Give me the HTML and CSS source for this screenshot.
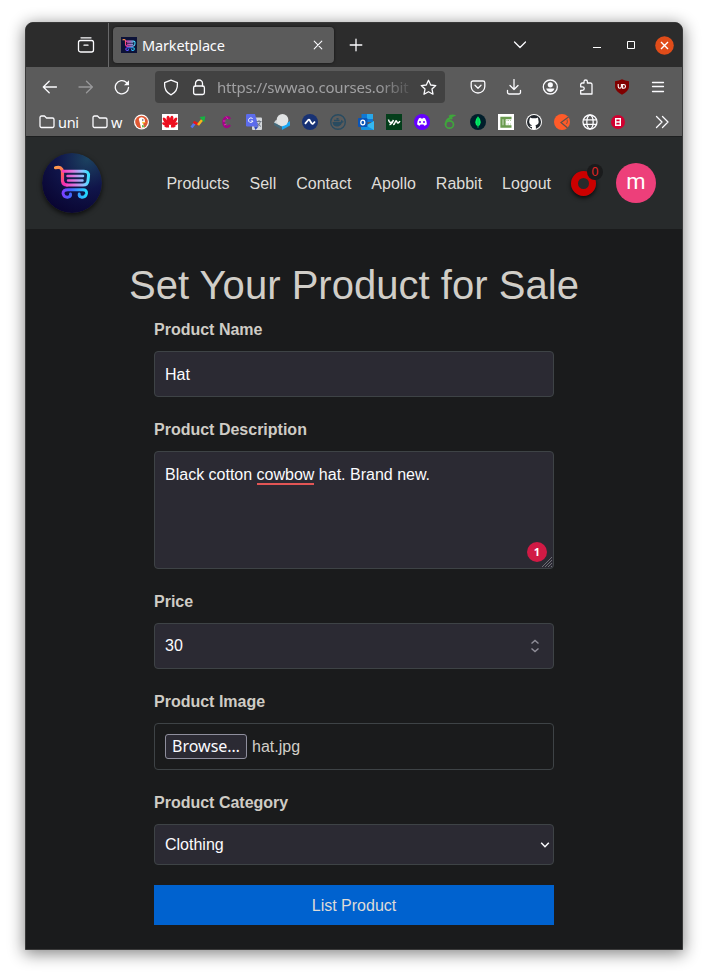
FILE: index.html
```html
<!DOCTYPE html>
<html lang="en">
<head>
<meta charset="utf-8">
<title>Marketplace</title>
<link rel="stylesheet" href="styles.css">
</head>
<body>
<svg width="0" height="0" class="defs">
  <defs>
    <linearGradient id="handle" gradientUnits="userSpaceOnUse" x1="12" y1="14" x2="22" y2="32">
      <stop offset="0" stop-color="#ffa14a"/><stop offset=".5" stop-color="#ff5a5a"/><stop offset="1" stop-color="#f32bb5"/>
    </linearGradient>
    <linearGradient id="basket" gradientUnits="userSpaceOnUse" x1="19" y1="26" x2="48" y2="22">
      <stop offset="0" stop-color="#ff28b0"/><stop offset=".45" stop-color="#d87be0"/><stop offset=".75" stop-color="#8cc4ff"/><stop offset="1" stop-color="#22e6ff"/>
    </linearGradient>
    <linearGradient id="wheels" gradientUnits="userSpaceOnUse" x1="19" y1="40" x2="46" y2="40">
      <stop offset="0" stop-color="#8a35ff"/><stop offset=".35" stop-color="#4464ff"/><stop offset="1" stop-color="#20e5ff"/>
    </linearGradient>
    <radialGradient id="night" cx=".75" cy=".1" r="1"><stop offset="0" stop-color="#1c4260"/><stop offset=".5" stop-color="#10154a"/><stop offset="1" stop-color="#090430"/></radialGradient>
    <g id="cart-mark" fill="none" stroke-linecap="round" stroke-linejoin="round">
      <path d="M13.500 14.700 Q20 13 20.500 18.500 V28 Q21 32 25 32" stroke="url(#handle)" stroke-width="3.200"/>
      <path d="M21 18.300 H42 Q47 18.300 46.500 23 L46 27.500 Q45.500 32 41 32 H25" stroke="url(#basket)" stroke-width="3"/>
      <path d="M25.500 22.900 H41 M26 27.400 H40.500" stroke="url(#basket)" stroke-width="2.500"/>
      <path d="M26 36.700 H41 Q45 36.700 44.500 40.500 Q43.500 44.700 39.500 44.200 Q36.700 43.500 37.200 41 M26 36.700 Q21 36.700 21 40.500 Q22 44.700 26 44.200 Q29 43.500 28.500 41" stroke="url(#wheels)" stroke-width="2.900"/>
    </g>
  </defs>
</svg>
<div class="window">
  <div class="tabstrip">
    <div class="tabview">
      <svg width="18" height="18" viewBox="0 0 18 18" class="line"><path d="M4 1.800h10"/><rect x="1.500" y="4.500" width="15" height="11.500" rx="2"/><path d="M7 9.200h4"/></svg>
    </div>
    <div class="tab">
      <svg width="16" height="16" viewBox="8 7 44 44"><rect x="8" y="7" width="44" height="44" fill="#0c1238"/><use href="#cart-mark"/></svg>
      <span class="tab-title">Marketplace</span>
      <svg width="10" height="10" viewBox="0 0 10 10" class="line thin"><path d="M1.200 1.200l7.600 7.600M8.800 1.200l-7.600 7.600"/></svg>
    </div>
    <svg width="14" height="14" viewBox="0 0 14 14" class="line plus"><path d="M7 1.200v11.600M1.200 7h11.600"/></svg>
    <svg width="14" height="8" viewBox="0 0 14 8" class="line all-tabs"><path d="M1.500 1L7 6.500 12.500 1"/></svg>
    <svg width="8" height="8" viewBox="0 0 8 8" class="minimize"><path d="M0 6.500h8" stroke="#fff"/></svg>
    <svg width="8" height="8" viewBox="0 0 8 8" class="maximize"><path d="M.5.500h7v7h-7z" fill="none" stroke="#fff"/></svg>
    <svg width="19" height="19" viewBox="0 0 19 19" class="close"><circle cx="9.500" cy="9.500" r="9.300" fill="#e04c19"/><path d="M6 6l7 7M13 6l-7 7" stroke="#fff" stroke-width="1.400"/></svg>
  </div>
  <div class="toolbar">
    <div class="group">
      <svg width="16" height="16" viewBox="0 0 16 16" class="line"><path d="M14.500 8H1.300M7.200 2.300L1.300 8l5.900 5.700"/></svg>
      <svg width="16" height="16" viewBox="0 0 16 16" class="line dim"><path d="M1 8h13.400M8.500 2.300L14.400 8l-5.900 5.700"/></svg>
      <svg width="16" height="16" viewBox="0 0 16 16" class="line"><path d="M14.500 8.500A6.600 6.600 0 1 1 12.500 3.500"/><path d="M15 1.300v5h-5z" fill="#fbfbfe" stroke="none"/></svg>
    </div>
    <div class="urlbar">
      <svg width="16" height="17" viewBox="0 0 16 17" class="line"><path d="M8 1.200L14.400 3.700C14.800 9 13 13.500 8 15.800 3 13.500 1.200 9 1.600 3.700z"/></svg>
      <svg width="14" height="17" viewBox="0 0 14 17" class="line lock"><rect x="1.600" y="7" width="10.800" height="8.500" rx="1.800"/><path d="M3.500 7V4.500a3.500 3.500 0 0 1 7 0V7"/></svg>
      <span class="url">https://swwao.courses.orbit</span>
      <svg width="17" height="17" viewBox="0 0 17 17" class="line"><path d="M8.500 1.300l2.200 4.700 5.100.6-3.800 3.500 1 5.100-4.500-2.500L4 15.200l1-5.100L1.200 6.600l5.100-.6z"/></svg>
    </div>
    <div class="group">
      <svg width="16" height="16" viewBox="0 0 16 16" class="line"><path d="M3 2h10a1.800 1.800 0 0 1 1.800 1.800V7.500a6.800 6.500 0 0 1-13.600 0V3.800A1.800 1.800 0 0 1 3 2z"/><path d="M5 6.200l3 3 3-3"/></svg>
      <svg width="16" height="16" viewBox="0 0 16 16" class="line"><path d="M8 .5v10M4 6.500l4 4 4-4M1.500 11.500v1.700a1.800 1.800 0 0 0 1.800 1.800h9.400a1.800 1.800 0 0 0 1.800-1.800v-1.700"/></svg>
      <svg width="16" height="16" viewBox="0 0 16 16" class="line"><circle cx="8.300" cy="8" r="7"/><circle cx="8.300" cy="5.800" r="2.600" fill="#fbfbfe" stroke="none"/><path d="M4.200 9.500h8.200Q11.600 12.900 8.300 12.900T4.200 9.500z" fill="#fbfbfe" stroke="none"/></svg>
      <svg width="16" height="16" viewBox="0 0 16 16" class="line"><path d="M6 4V2.700a1.700 1.700 0 0 1 3.400 0V4H12.500a1.500 1.500 0 0 1 1.500 1.500V15H2.700v-3.700h1.800a1.700 1.700 0 0 0 0-3.500H2.700V5.500A1.500 1.500 0 0 1 4.200 4z"/></svg>
      <svg width="16" height="16" viewBox="0 0 16 16"><path d="M8 .3Q11 2 15 2.200V8Q14.500 12.500 8 15.800 1.500 12.500 1 8V2.200Q5 2 8 .3z" fill="#800000"/><path d="M4.200 5v2.600q0 1.700 1.600 1.700t1.600-1.700V5M8.600 5.500h1a1.900 1.900 0 0 1 0 3.800h-1z" fill="none" stroke="#fff" stroke-width="1.100"/></svg>
      <svg width="16" height="16" viewBox="0 0 16 16" class="line"><path d="M2.500 3.500h11M2.500 7.500h11M2.500 12.500h11"/></svg>
    </div>
  </div>
  <div class="bookmarks">
    <div class="folder"><svg width="16" height="14" viewBox="0 0 16 14" class="line"><path d="M1 11V2.500A1.500 1.500 0 0 1 2.500 1h3l2 2h6A1.500 1.500 0 0 1 15 4.500V11a1.500 1.500 0 0 1-1.500 1.500h-11A1.500 1.500 0 0 1 1 11z"/></svg><span class="uni">uni</span></div>
    <div class="folder"><svg width="16" height="14" viewBox="0 0 16 14" class="line"><path d="M1 11V2.500A1.500 1.500 0 0 1 2.500 1h3l2 2h6A1.500 1.500 0 0 1 15 4.500V11a1.500 1.500 0 0 1-1.500 1.500h-11A1.500 1.500 0 0 1 1 11z"/></svg><span>w</span></div>
    <div class="sites">
      <svg viewBox="0 0 16 16"><circle cx="7.500" cy="8" r="7.500" fill="#fff"/><circle cx="7.500" cy="8" r="6.300" fill="#de5833"/><path d="M4.800 5q1.500-2.500 4.500-1.200 2 1.200 1.700 4l-2 1.700 1.500 4q-2 .7-3.500.2z" fill="#fff"/><circle cx="8.800" cy="6" r=".7" fill="#333"/><path d="M8 7.800l4 .5-3.500 1.500z" fill="#fc3"/><path d="M8 11l3.200 1-3 1.500z" fill="#4cba3c"/></svg>
      <svg viewBox="0 0 16 16"><path d="M0 0h16v16H0z" fill="#fff"/><g fill="#ee1020"><ellipse cx="6.500" cy="6.300" rx="1.800" ry="4.700" transform="rotate(-9 6.500 6)"/><ellipse cx="9.500" cy="6.300" rx="1.800" ry="4.700" transform="rotate(9 9.500 6)"/><ellipse cx="3.800" cy="7.500" rx="1.700" ry="4.500" transform="rotate(-35 3.800 7.500)"/><ellipse cx="12.200" cy="7.500" rx="1.700" ry="4.500" transform="rotate(35 12.200 7.500)"/><ellipse cx="3.500" cy="10.500" rx="1.400" ry="3.700" transform="rotate(-65 3.500 10.500)"/><ellipse cx="12.500" cy="10.500" rx="1.400" ry="3.700" transform="rotate(65 12.500 10.500)"/><path d="M2 12l5-1v2.500H4zM14 12l-5-1v2.500h3z"/></g></svg>
      <svg viewBox="0 0 16 16" fill="none" stroke-width="2.600"><path d="M1.500 13.500l3-4" stroke="#5375ef"/><path d="M3.500 7.800l5.300 2.900" stroke="#ef1515"/><path d="M8 11l4-5" stroke="#f5b51b"/><path d="M9.500 3l5.800-.8-1 6z" fill="#17b442"/></svg>
      <svg viewBox="0 0 16 16" fill="none"><path d="M12 5Q10.500 2.500 8 3.500 5 5 5.500 9q.5 4 3.500 4 1.500 0 3-2" stroke="#a20486" stroke-width="2.400"/><path d="M8 2.500l2 2.500M5 7h2.500M6 11l2.500-1" stroke="#e029b5" stroke-width="1"/></svg>
      <svg viewBox="0 0 16 16"><rect x="6" y="3.500" width="10" height="12.500" rx="1" fill="#d5d8dc"/><path d="M0 1.200Q0 0 1.200 0H9l3.500 12.500H1.200Q0 12.500 0 11.300z" fill="#5c6cec"/><path d="M8 12.500h4.500L9.500 16z" fill="#354bb9"/><path d="M6.800 5A2.300 2.300 0 1 0 7 7H4.800" fill="none" stroke="#fff"/><path d="M10.500 7.500h5M13 6v1.500M14.500 7.500q-1 3-3 4.500m0-3q1 2 3.500 3.500" fill="none" stroke="#6b7480" stroke-width=".9"/></svg>
      <svg viewBox="0 0 16 16"><path d="M0 8l8 4v4L0 11z" fill="#456a7b"/><path d="M8 12l8-5v4.500L8 16z" fill="#1aa8f5"/><path d="M2 6l-2 2.500 8 4 5-3.500z" fill="#cfd5d8"/><circle cx="8.500" cy="6" r="5.900" fill="#e1e3e4"/></svg>
      <svg viewBox="0 0 16 16"><circle cx="8" cy="8" r="8" fill="#183274"/><path d="M3 9.800L6.200 6q.7-.7 1.500.2l1.800 3q.8 1 1.600.3L13 7.500" fill="none" stroke="#fff" stroke-width="1.800"/></svg>
      <svg viewBox="0 0 16 16"><circle cx="8" cy="8" r="7.300" fill="none" stroke="#294b60" stroke-width="1.400"/><path d="M2.500 8h8.200q0-1.500 1-2.200 1 .7 1 1.700h1.300q-.8 1.300-2 1.300-1.500 4-5 3.800Q3 12.500 2.500 8z" fill="#294b60"/><path d="M4 5.800h5.500v1.500H4zM6.500 4h2v1.500h-2z" fill="#294b60"/></svg>
      <svg viewBox="0 0 16 16"><path d="M3.500 0H15v8H3.500z" fill="#0f78d4"/><path d="M9 0h6v5H9z" fill="#28a8ea"/><path d="M3 7l6.500 4L16 7v9H4q-1 0-1-1z" fill="#1490df"/><path d="M16 7v9L8 11.500z" fill="#35b8f1"/><rect y="4" width="9.500" height="9" rx="1" fill="#0a55b8"/><ellipse cx="4.800" cy="8.500" rx="2" ry="2.300" fill="none" stroke="#fff" stroke-width="1.300"/></svg>
      <svg viewBox="0 0 16 16"><path d="M0 0h16v16H0z" fill="#043e1b"/><path d="M2.500 5.500q.5 3 2.200 3T7.500 6Q6 10 3.500 10.800M7 10.500q1.500 0 2.300-2.500t1.700 0q.8 2.500 3-.8" fill="none" stroke="#fff" stroke-width="1.500"/></svg>
      <svg viewBox="0 0 16 16"><circle cx="8" cy="8" r="8" fill="#6500ff"/><path d="M5 4.200l1.500-.5.500.8h2l.5-.8 1.500.5q2 3 1.900 6-1 1.100-2.700 1.500l-.7-1.100H6.500l-.7 1.100Q4 11.300 3.100 10.200 3 7 5 4.200z" fill="#fff"/><circle cx="6" cy="8" r="1" fill="#6500ff"/><circle cx="10" cy="8" r="1" fill="#6500ff"/></svg>
      <svg viewBox="0 0 16 16" fill="none" stroke="#3fa63c" stroke-width="1.700"><ellipse cx="7.500" cy="10.500" rx="4" ry="3.700"/><path d="M3.700 11Q3 7 6 5t6-3.500Q9.500.8 7 2.500m-1 3q2-1 4.500-1.200"/></svg>
      <svg viewBox="0 0 16 16"><circle cx="8" cy="8" r="8" fill="#001e2b"/><path d="M8 2.300q3 3 2.800 6-.2 2.600-2.500 4V14h-.6v-1.700q-2.400-1.400-2.500-4Q5.200 5.300 8 2.300z" fill="#00ed64"/><path d="M8 3v10" stroke="#00a850" stroke-width=".6"/></svg>
      <svg viewBox="0 0 16 16"><path d="M0 0h16v16H0z" fill="#fff"/><path d="M13.500 4H3.500v8.500h10M6.500 5v7" fill="none" stroke="#6a9b4f" stroke-width="2.300"/><path d="M7 6.500h6M7 10h6" stroke="#a9c79a" stroke-width=".9" stroke-dasharray="1.500 1"/></svg>
      <svg viewBox="0 0 16 16"><circle cx="8" cy="8" r="8" fill="#fff"/><circle cx="8" cy="8" r="7" fill="#22272d"/><path d="M4 3.500l2 .8h4l2-.8.3 2.300q1.500 4.700-2.800 5.400.4.600.4 1.500V15H6v-2q-1.500.3-2.500-1.500 1.700.8 2.500-.3-3.800-1-2.500-5.400z" fill="#fff"/></svg>
      <svg viewBox="0 0 16 16"><circle cx="8" cy="8" r="8" fill="#ff5b29"/><path d="M14.500 3L7 8.500l6.500 5.500" fill="none" stroke="#60504a" stroke-width="1.200"/><path d="M13 5.500q1 2.500-.5 4.500" fill="none" stroke="#60504a" stroke-width=".8"/></svg>
      <svg viewBox="0 0 16 16" class="line"><circle cx="8" cy="8" r="7"/><ellipse cx="8" cy="8" rx="3.200" ry="7"/><path d="M1.500 5.800h13M1.500 10.300h13"/></svg>
      <svg viewBox="0 0 16 16"><circle cx="8" cy="8" r="7" fill="#d00030"/><path d="M5.700 4.800h4.600v6.400H5.700zM5.500 8h5" fill="none" stroke="#fff" stroke-width="1.400"/></svg>
    </div>
    <svg width="14" height="14" viewBox="0 0 14 14" class="line more"><path d="M1.500 1.500L7 7l-5.500 5.500M7.500 1.500L13 7l-5.500 5.500"/></svg>
  </div>
  <header class="site-header">
    <svg class="logo" width="60" height="60" viewBox="0 0 60 60"><circle cx="30" cy="30" r="30" fill="url(#night)"/><use href="#cart-mark"/></svg>
    <nav>
      <a>Products</a><a>Sell</a><a>Contact</a><a>Apollo</a><a>Rabbit</a><a>Logout</a>
    </nav>
    <div class="ring"><span class="count">0</span></div>
    <div class="avatar">m</div>
  </header>
  <main>
    <h1>Set Your Product for Sale</h1>
    <form>
      <label>Product Name</label>
      <div class="field">Hat</div>
      <label>Product Description</label>
      <div class="field area">Black cotton <span class="typo">cowbow</span> hat. Brand new.
        <span class="errors">1</span>
        <svg class="grip" width="12" height="12" viewBox="0 0 12 12"><path d="M1 11L11 1M4 11L11 4M7 11l4-4M10 11l1-1" stroke="#77767e" stroke-width=".9"/></svg>
      </div>
      <label>Price</label>
      <div class="field number">30<svg width="10" height="14" viewBox="0 0 10 14"><path d="M1.500 4.500L5 1.500l3.500 3M1.500 9.500L5 12.500l3.500-3" fill="none" stroke="#8f8e98" stroke-width="1.400"/></svg></div>
      <label>Product Image</label>
      <div class="field file"><span class="browse">Browse…</span><span>hat.jpg</span></div>
      <label>Product Category</label>
      <div class="field select">Clothing<svg width="10" height="8" viewBox="0 0 10 8"><path d="M1.200 1.800L5 5.700l3.800-3.900" fill="none" stroke="#fbfbfe" stroke-width="1.500"/></svg></div>
      <button type="button">List Product</button>
    </form>
  </main>
</div>
</body>
</html>
```

FILE: styles.css
```css
* { box-sizing: border-box; }
body { margin: 0; height: 978px; padding: 22px 25px 28px; background: #fff; overflow: hidden; font-family: "Liberation Sans", Arial, sans-serif; font-size: 16px; }
svg { display: block; flex: none; }
.defs { position: absolute; }
.line { fill: none; stroke: #fbfbfe; stroke-width: 1.3; stroke-linecap: round; stroke-linejoin: round; }
.thin { stroke-width: 1.1; }
.dim { stroke: #99999b; }
.window { width: 658px; height: 928px; border: 1px solid #393939; border-radius: 8px 8px 0 0; background: #1a1b1c; overflow: hidden; box-shadow: 0 3px 16px 1px rgba(0,0,0,.48); }

.tabstrip { height: 44px; background: #2c2c2c; display: flex; align-items: center; }
.tabview { width: 83px; align-self: stretch; border-right: 1px solid #69696a; display: flex; align-items: center; justify-content: flex-end; padding-right: 13px; }
.tab { width: 221px; height: 36px; margin-left: 4px; margin-top: -1px; background: #5b5b5b; border-radius: 4px; box-shadow: 0 0 3px rgba(0,0,0,.6); display: flex; align-items: center; padding: 0 11px 0 8px; }
.tab-title { flex: 1; margin-left: 5px; color: #fbfbfe; font: 14.5px/20px "Noto Sans", sans-serif; letter-spacing: -.15px; }
.plus { margin-left: 15px; }
.all-tabs { margin-left: 150px; }
.minimize { margin-left: 66px; }
.maximize { margin-left: 26px; }
.close { margin-left: 20px; }

.toolbar { height: 40px; background: #5b5b5b; display: flex; align-items: center; padding: 0 16px; }
.group { display: flex; gap: 20px; }
.urlbar { width: 290px; height: 32px; margin: 0 25px; background: #424242; border-radius: 4px; display: flex; align-items: center; padding: 0 8px; }
.lock { margin-left: 13px; }
.url { width: 196px; margin: 0 7px 0 11px; white-space: nowrap; color: #a0a0a2; font: 15px/24px "Noto Sans", sans-serif; letter-spacing: -.18px; -webkit-mask-image: linear-gradient(to right, #000 82%, transparent 102%); mask-image: linear-gradient(to right, #000 82%, transparent 102%); }

.bookmarks { height: 29px; background: #5b5b5b; display: flex; align-items: center; padding-left: 13px; }
.folder { display: flex; align-items: center; gap: 4px; color: #fbfbfe; font: 14.5px/20px "Noto Sans", sans-serif; letter-spacing: -.3px; margin-right: 13px; height: 28px; }
.folder span { width: 11px; margin-left: -1px; margin-right: 1px; }
.folder .uni { width: 20px; }
.sites { display: flex; gap: 12px; margin-left: -2px; }
.sites svg { width: 16px; height: 16px; }
.more { margin-left: 29px; }

.site-header { height: 93px; background: #272a2b; border-top: 1px solid #1d1f20; display: flex; align-items: center; padding: 0 26px 0 16px; }
.logo { border-radius: 50%; box-shadow: 0 2px 5px rgba(0,0,0,.7); }
nav { display: flex; gap: 20px; margin-left: 64.4px; padding-top: 1px; color: #dfddd9; }
.ring { position: relative; width: 25px; height: 25px; margin-left: 20px; border: 7px solid #cb0000; border-radius: 50%; box-shadow: 0 2px 4px rgba(0,0,0,.75); }
.count { position: absolute; left: 9px; top: -14px; width: 16px; height: 16px; border-radius: 50%; background: #1a1b1c; color: #e22525; font-size: 12.5px; line-height: 16px; text-align: center; }
.avatar { width: 40px; height: 40px; margin-left: auto; border-radius: 50%; background: #ed3f7a; color: #fff; font: 400 22px/38px Roboto, sans-serif; text-align: center; }

main { display: flex; flex-direction: column; align-items: center; padding-top: 32px; color: #d1cec8; }
h1 { margin: 0 0 8px; font-size: 40px; line-height: 48px; font-weight: 400; white-space: nowrap; letter-spacing: .03px; }
form { width: 400px; }
label { display: block; font-weight: 700; line-height: 24px; padding-top: 1px; margin-bottom: 9px; color: #cfccc5; }
.field { height: 46px; margin-bottom: 20px; border: 1px solid #3e4346; border-radius: 4px; background: #2b2a33; color: #fbfbfe; padding: 0 10px; line-height: 46px; }
.area { position: relative; height: 118px; padding-top: 11px; line-height: 24px; }
.typo { display: inline-block; height: 22px; border-bottom: 2px solid #e35555; }
.errors { position: absolute; right: 6px; bottom: 6px; width: 20px; height: 20px; border-radius: 50%; background: #d11a45; color: #fff; font: 700 11px/20px "Open Sans", sans-serif; text-align: center; }
.grip { position: absolute; right: 0; bottom: 0; }
.number, .select { display: flex; justify-content: space-between; align-items: center; }
.number { padding-right: 13px; }
.file { height: 47px; background: none; color: #d1cec8; display: flex; align-items: center; }
.browse { width: 82px; height: 25px; margin-right: 5px; border: 1px solid #8f8f9d; border-radius: 3px; background: #2b2a33; color: #fbfbfe; font: 16px/23px "Noto Sans", sans-serif; text-align: center; }
.select { height: 41px; padding-right: 3px; line-height: 39px; }
button { display: block; width: 400px; height: 40px; border: 0; padding: 2px 0 0; background: #0062cf; color: #dedbd7; font: 16px "Liberation Sans", Arial, sans-serif; }
```
